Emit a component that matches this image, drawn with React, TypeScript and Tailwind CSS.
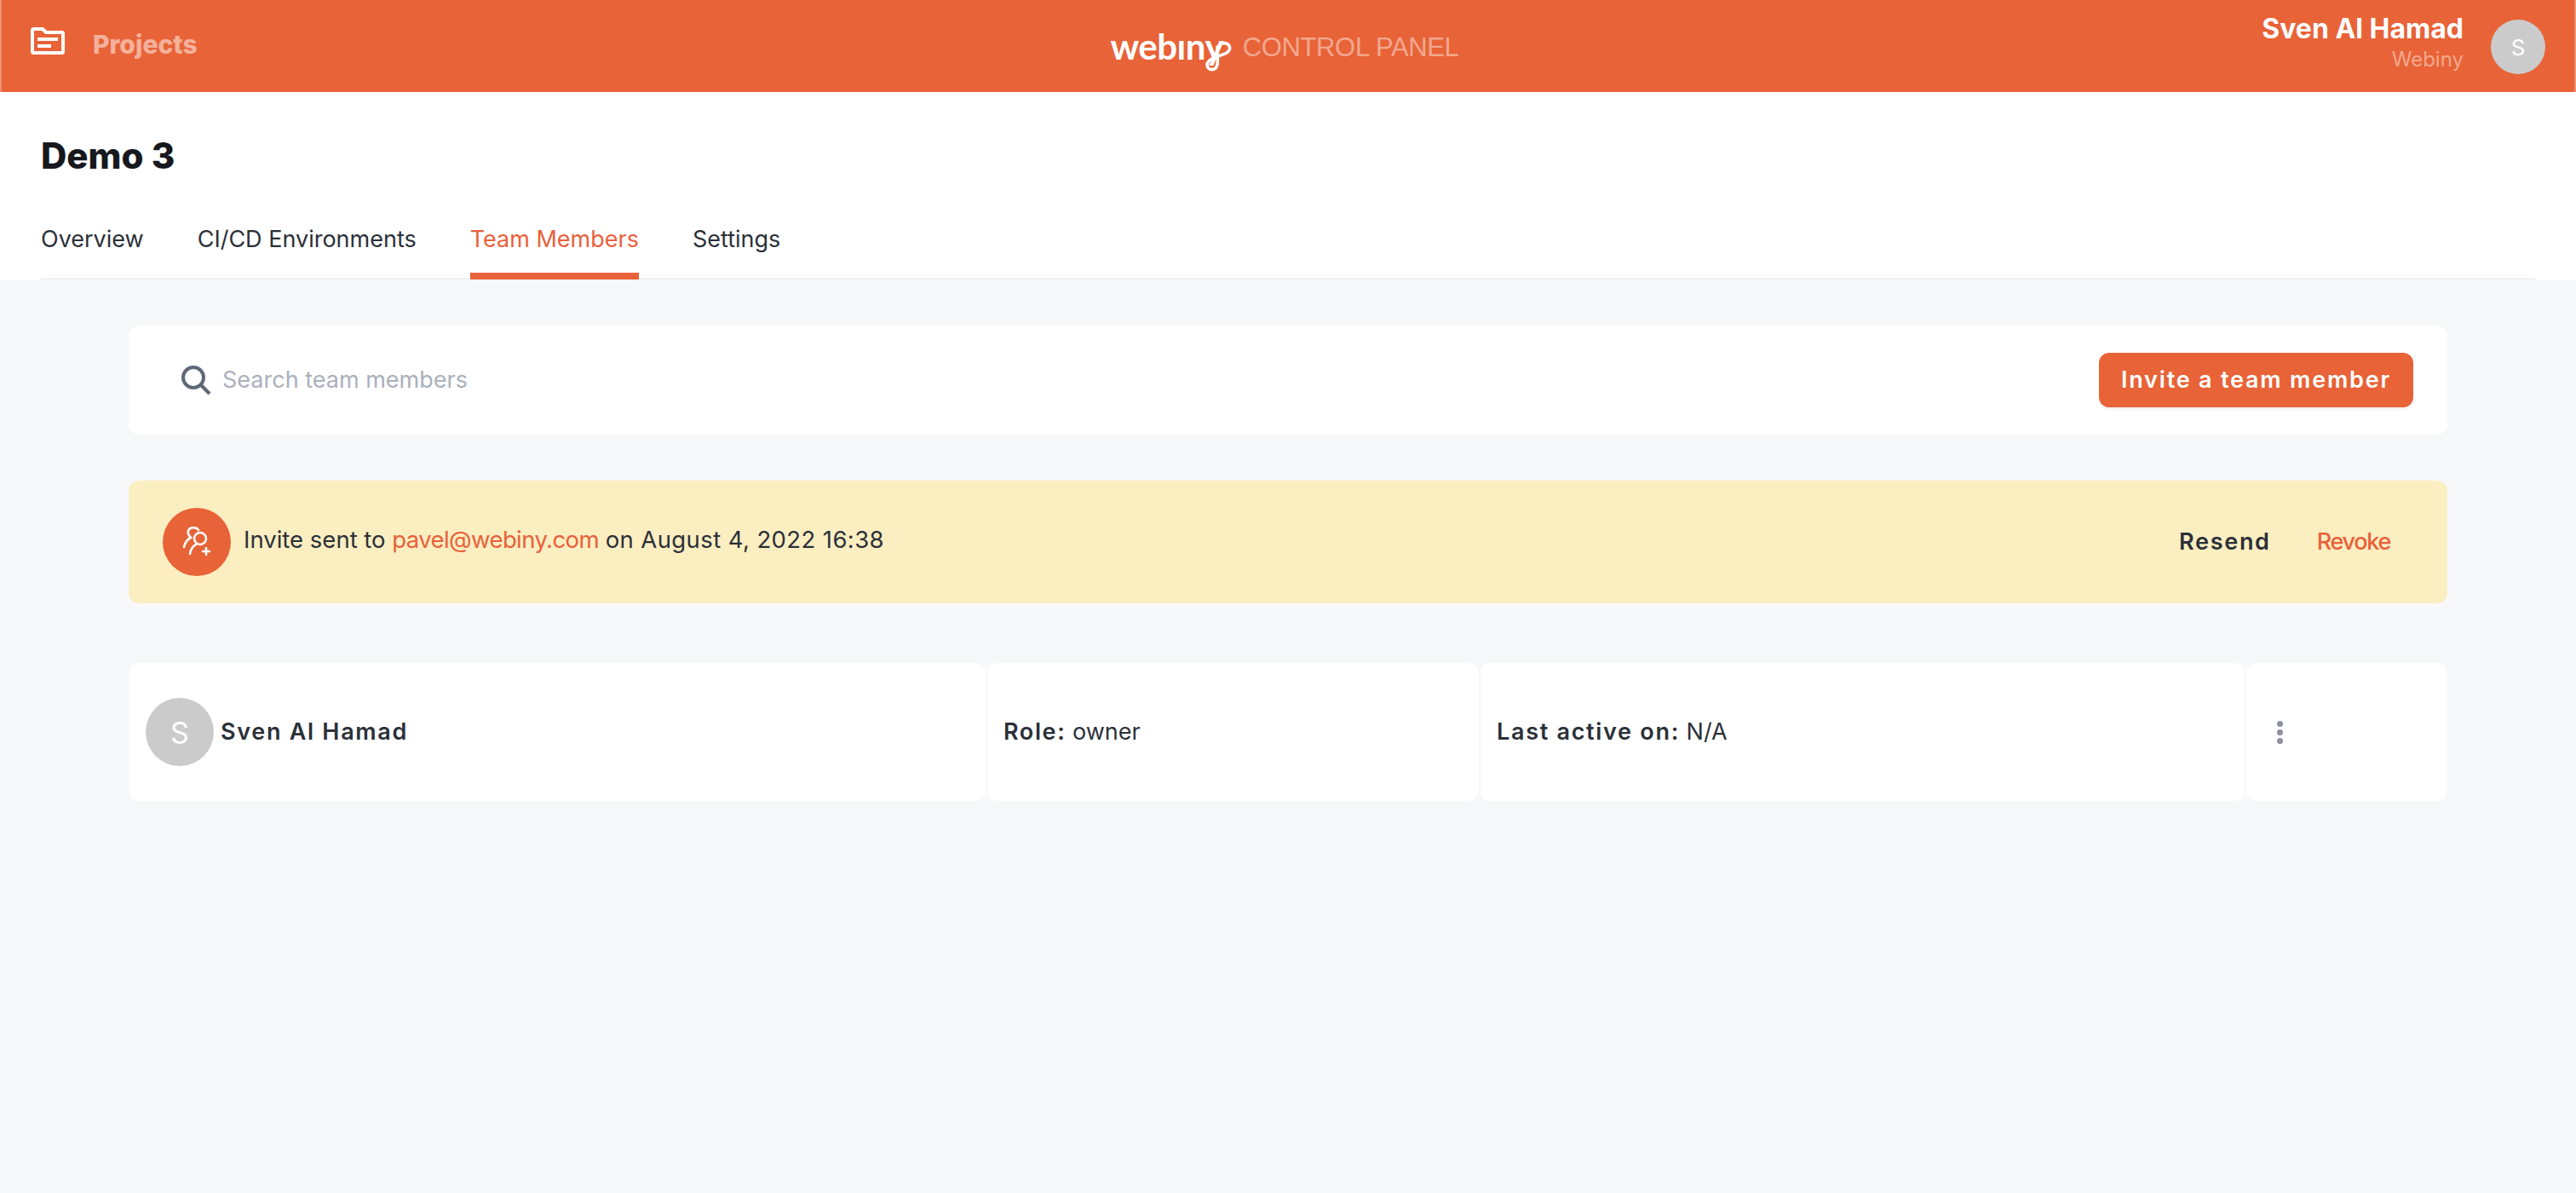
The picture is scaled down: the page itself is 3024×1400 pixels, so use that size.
const Avatar = ({ size }: { size: string }) => (
  <div className={`${size} shrink-0 rounded-full bg-[#cbcbcb] text-white flex items-center justify-center`}>S</div>
);

const Tab = ({ label, active }: { label: string; active?: boolean }) => (
  <div
    className={`h-[96px] -mb-[2px] flex items-center border-b-[8px] pt-[10px] ${
      active ? "border-[#e8633a] text-[#e8613a]" : "border-transparent text-[#2b3038]"
    }`}
  >
    {label}
  </div>
);

const Logo = () => (
  <div className="relative w-[156px] text-white text-[42px] font-bold leading-none font-['Lato',sans-serif] tracking-[-0.5px]">
    webıny
    <svg className="absolute left-[108px] top-[12px] w-[36px] h-[40px]" viewBox="0 0 36 40" fill="none">
      <path
        d="M22 6 C31 4 35 12 28 17 C22 21 6 22 5 31 C5 38 15 39 17 31 C18 26 17 20 17 10"
        stroke="white"
        strokeWidth="3.6"
        strokeLinecap="round"
      />
    </svg>
  </div>
);

export default function App() {
  return (
    <div className="min-h-[1400px] bg-[#f7f8fa] font-['Inter',sans-serif] text-[#2b3038] text-[27px]">
      <header className="h-[108px] bg-[#e86337] border-x-2 border-x-[#ee8f72] flex items-center pl-[34px] pr-[34px]">
        <div className="flex-1 flex items-center gap-[33px] pb-[12px]">
          <svg width="40" height="32" viewBox="0 0 40 32" fill="none" stroke="white" strokeWidth="4">
            <path d="M2 3.5 C2 2.6 2.6 2 3.5 2 H14 L18 6 H36.5 C37.4 6 38 6.6 38 7.5 V28.5 C38 29.4 37.4 30 36.5 30 H3.5 C2.6 30 2 29.4 2 28.5 Z" strokeLinejoin="round" />
            <path d="M8 14 H32 M8 22 H24" />
          </svg>
          <span className="mt-[8px] text-[30px] font-extrabold text-white/50">Projects</span>
        </div>
        <div className="w-[409px] -ml-[8px] flex items-center">
          <Logo />
          <span className="mt-[4px] whitespace-nowrap text-[31px] text-white/45 font-['Liberation_Sans',sans-serif] tracking-[-0.35px]">CONTROL PANEL</span>
        </div>
        <div className="flex-1 flex items-center justify-end gap-[32px]">
          <div className="text-right pb-[8px]">
            <div className="text-[32px] leading-[36px] font-bold text-white">Sven Al Hamad</div>
            <div className="mt-[4px] text-[24px] leading-[28px] text-white/45">Webiny</div>
          </div>
          <Avatar size="mt-[2px] w-[64px] h-[64px] text-[26px]" />
        </div>
      </header>

      <section className="bg-white pt-[51px] px-[48px]">
        <h1 className="text-[42px] leading-[48px] font-extrabold text-[#16181d]">Demo 3</h1>
        <nav className="mt-[25px] flex gap-[63px] border-b-2 border-[#eef0f2]">
          <Tab label="Overview" />
          <Tab label="CI/CD Environments" />
          <Tab label="Team Members" active />
          <Tab label="Settings" />
        </nav>
      </section>

      <main className="px-[151px] pt-[54px] flex flex-col">
        <div className="h-[128px] bg-white rounded-[12px] flex items-center justify-between pl-[61px] pr-[40px]">
          <div className="flex items-center gap-[13px] text-[#aab0bc]">
            <svg width="36" height="36" viewBox="0 0 36 36" fill="none" stroke="#5f6877" strokeWidth="4">
              <circle cx="15" cy="15" r="12" />
              <path d="M23.5 23.5 L34 34" />
            </svg>
            Search team members
          </div>
          <button className="w-[369px] h-[64px] rounded-[12px] bg-[#e86337] text-white font-semibold tracking-[1.8px] shadow-[0_3px_2px_rgba(0,0,0,0.05)]">
            Invite a team member
          </button>
        </div>

        <div className="mt-[54px] h-[144px] bg-[#fbeec1] rounded-[12px] flex items-center justify-between pl-[40px] pr-[67px]">
          <div className="flex items-center gap-[15px]">
            <div className="w-[80px] h-[80px] rounded-full bg-[#e86337] flex items-center justify-center">
              <svg width="36" height="36" viewBox="0 0 36 36" fill="none" stroke="white" strokeWidth="2.6" strokeLinecap="round">
                <circle cx="22" cy="14" r="7" />
                <path d="M10 32 C11 26 13 23 17 21" />
                <path d="M20 4 C17 0 10 0 8 5 C7 8 9 11 11 13 C7 15 4 19 3 24" />
                <path d="M25 29 H33 M29 25 V33" />
              </svg>
            </div>
            <div className="pb-[4px] text-[27.5px]">
              Invite sent to <span className="text-[#e8613a] tracking-[-0.6px]">pavel@webiny.com</span>{" "}
              <span className="tracking-[0.4px]">on August 4, 2022 16:38</span>
            </div>
          </div>
          <div className="flex items-center gap-[54px]">
            <span className="font-semibold tracking-[1.7px]">Resend</span>
            <span className="font-medium text-[#e8613a] tracking-[-1.3px]">Revoke</span>
          </div>
        </div>

        <div className="mt-[70px] h-[162px] flex gap-[2px]">
          <div className="w-[1006px] bg-white rounded-[12px] flex items-center gap-[8px] pl-[20px] font-semibold tracking-[1.7px]">
            <Avatar size="w-[80px] h-[80px] text-[34px] font-normal tracking-normal" />
            Sven Al Hamad
          </div>
          <div className="w-[577px] bg-white rounded-[12px] flex items-center pl-[19px]">
            <span><b className="font-semibold tracking-[1.6px]">Role:</b> owner</span>
          </div>
          <div className="w-[897px] bg-white rounded-[12px] flex items-center pl-[19px]">
            <span><b className="font-semibold tracking-[1.7px]">Last active on:</b> N/A</span>
          </div>
          <div className="flex-1 bg-white rounded-[12px] flex items-center pl-[36px]">
            <div className="flex flex-col gap-[3px]">
              <div className="w-[7px] h-[7px] rounded-full bg-[#8a909e]" />
              <div className="w-[7px] h-[7px] rounded-full bg-[#8a909e]" />
              <div className="w-[7px] h-[7px] rounded-full bg-[#8a909e]" />
            </div>
          </div>
        </div>
      </main>
    </div>
  );
}
